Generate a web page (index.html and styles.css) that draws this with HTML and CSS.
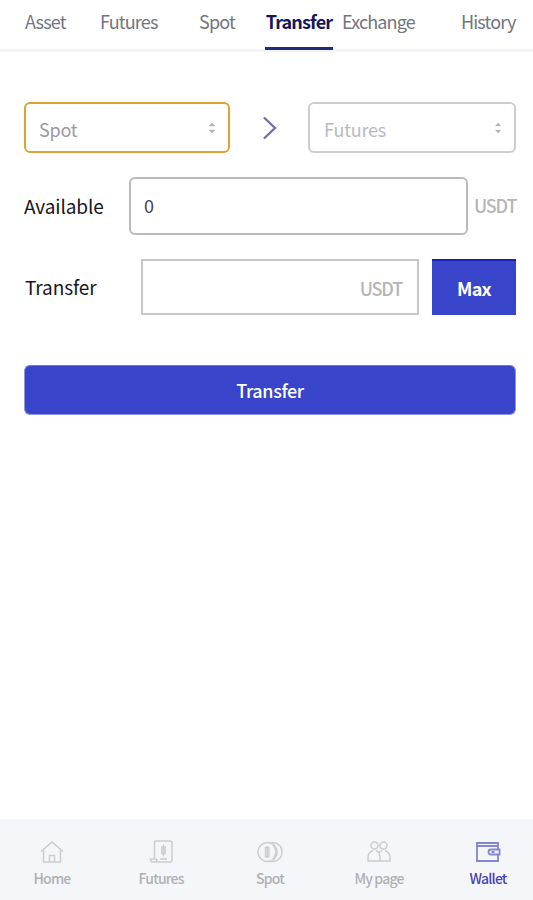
FILE: index.html
```html
<!DOCTYPE html>
<html lang="en">
<head>
  <meta charset="UTF-8">
  <meta name="viewport" content="width=device-width, initial-scale=1">
  <title>Wallet - Transfer</title>
  <link rel="stylesheet" href="styles.css">
</head>
<body>

<nav class="tabs">
  <a class="tab-asset">Asset</a>
  <a class="tab-futures">Futures</a>
  <a class="tab-spot">Spot</a>
  <a class="tab-transfer active">Transfer</a>
  <a class="tab-exchange">Exchange</a>
  <a class="tab-history">History</a>
</nav>

<main>
  <div class="accounts">
    <div class="select from">
      <span>Spot</span>
      <svg width="8" height="12" viewBox="0 0 8 12"><path d="M.5 4.200 4 .5l3.500 3.700zM.5 7.800h7L4 11.500z"/></svg>
    </div>
    <svg class="arrow" width="16" height="24" viewBox="0 0 16 24"><path d="M2 1.5 13 12 2 22.5"/></svg>
    <div class="select to">
      <span>Futures</span>
      <svg width="8" height="12" viewBox="0 0 8 12"><path d="M1 4 4 .8 7 4zM1 8h6l-3 3.200z"/></svg>
    </div>
  </div>

  <div class="row available">
    <label>Available</label>
    <div class="field">0</div>
    <span class="unit">USDT</span>
  </div>

  <div class="row amount">
    <label>Transfer</label>
    <div class="field"><span class="unit">USDT</span></div>
    <button class="max">Max</button>
  </div>

  <button class="submit">Transfer</button>
</main>

<footer class="bottom">
  <a>
    <svg width="26" height="24" viewBox="0 0 26 24">
      <path d="M2 11.5 13 2l11 9.500M4.500 10v12h17V10M10.500 22v-6.500h5V22"/>
    </svg>
    <span>Home</span>
  </a>
  <a>
    <svg width="26" height="24" viewBox="0 0 26 24">
      <path d="M6.500 18V3q0-2 2-2H22q2 0 2 2v17q0 2-2 2H5q-2.500 0-2.500-3H9M9 19q0 3-2 3"/>
      <path class="dense" d="M15.500 4.500v12M13.800 7h3.400v6.500h-3.400zM12 19h7"/>
    </svg>
    <span>Futures</span>
  </a>
  <a>
    <svg width="26" height="24" viewBox="0 0 26 24">
      <circle cx="10.500" cy="12" r="9.600"/>
      <path d="M14 2.700q2-.500 4 0 7 2.300 7 9.300t-7 9.300q-2 .5-4 0M16 5q6 7 0 14"/>
      <path class="dense" d="M8.500 7.500h3.500v9H8.500zM10.250 6v12"/>
    </svg>
    <span>Spot</span>
  </a>
  <a>
    <svg width="26" height="24" viewBox="0 0 26 24">
      <circle cx="8.500" cy="5.500" r="3.500"/>
      <circle cx="17.500" cy="5.500" r="3.500"/>
      <path d="M7 10.500Q2 12 2 18v3h12v-3q0-6-4-7.500M16 10.500Q13.500 11.500 12.700 13.500M19 10.500Q24 12 24 18v3H14"/>
    </svg>
    <span>My page</span>
  </a>
  <a class="active">
    <svg width="26" height="24" viewBox="0 0 26 24">
      <path d="M23 9V3H2v18h21v-6M2 6h21"/>
      <path d="M24.500 9.500H16q-2.500 0-2.500 2.500t2.500 2.500h8.500zM16.500 12h3"/>
    </svg>
    <span>Wallet</span>
  </a>
</footer>

</body>
</html>
```
FILE: styles.css
```css
* {
  box-sizing: border-box;
}

body {
  margin: 0;
  height: 900px;
  display: flex;
  flex-direction: column;
  overflow: hidden;
  background-color: #fff;
  font-family: "Noto Sans CJK KR", "Noto Sans", sans-serif;
  font-size: 18px;
  line-height: 24px;
  color: #171722;
  white-space: nowrap;
}

button {
  border: none;
  padding: 0;
  font-family: inherit;
  font-size: 18px;
  color: #fff;
  background-color: #3845cb;
}

/* top tabs */
.tabs {
  display: flex;
  height: 52px;
  padding: 9px 0 0 25px;
  border-bottom: 3px solid #f4f4f9;
  color: #74757f;
  letter-spacing: -0.85px;
}

.tabs a {
  height: 41px;
}

.tab-asset { width: 75px; }
.tab-futures { width: 99px; }
.tab-spot { width: 66px; }
.tab-transfer { width: 68px; margin-right: 9px; }
.tab-exchange { width: 119px; }

.tabs .active {
  border-bottom: 3px solid #202a83;
  color: #17165a;
  font-weight: bold;
  text-align: center;
}

/* form */
main {
  flex: 1;
  padding: 50px 17px 0 24px;
}

.accounts {
  display: flex;
  align-items: center;
  justify-content: space-between;
}

.select {
  display: flex;
  align-items: center;
  justify-content: space-between;
  height: 51px;
  padding: 2px 12px 0 13px;
  border: 2px solid #cdcdd0;
  border-radius: 6px;
  color: #b9bac1;
  letter-spacing: -0.2px;
}

.select svg {
  fill: #b5b5ba;
  margin-bottom: 2px;
}

.from {
  width: 206px;
  border-color: #e1a135;
  color: #999aa5;
}

.to {
  width: 208px;
  padding-left: 14px;
}

.arrow {
  fill: none;
  stroke: #7370a8;
  stroke-width: 2.4;
  margin-left: 2px;
}

.row {
  display: flex;
  align-items: center;
}

.row label {
  flex-shrink: 0;
  font-size: 19px;
  letter-spacing: -0.1px;
}

.unit {
  color: #b5b5b7;
  font-weight: 500;
  letter-spacing: -1.2px;
}

.available {
  margin-top: 24px;
}

.available label {
  width: 105px;
}

.available .field {
  flex-shrink: 0;
  width: 339px;
  height: 58px;
  padding: 14px 13px;
  border: 2px solid #b9b9c5;
  border-radius: 6px;
  color: #44444c;
}

.available .unit {
  margin: 0 0 2px 6px;
}

.amount {
  margin-top: 24px;
}

.amount label {
  width: 117px;
  padding-left: 1px;
}

.amount .field {
  width: 278px;
  height: 56px;
  padding: 15px 15px;
  border: 2px solid #c8c8ca;
  text-align: right;
}

.max {
  width: 84px;
  height: 56px;
  margin-left: 13px;
  border-top: 2px solid #1b20b4;
  font-weight: bold;
  letter-spacing: -0.7px;
}

.submit {
  display: block;
  width: 492px;
  height: 50px;
  margin-top: 50px;
  border: 1px solid #8e96e2;
  border-top-color: #7078d6;
  border-radius: 6px;
  font-weight: 500;
  letter-spacing: -0.4px;
}

/* bottom menu */
.bottom {
  display: flex;
  justify-content: space-between;
  height: 81px;
  padding: 21px 18px 0 25px;
  background-color: #f5f6fa;
  font-size: 14px;
  color: #b0b0b4;
}

.bottom a {
  display: flex;
  flex-direction: column;
  align-items: center;
  gap: 2px;
  width: 54px;
  font-weight: 500;
  letter-spacing: -0.8px;
}

.bottom svg {
  fill: none;
  stroke: #cccdd0;
  stroke-width: 1.5;
}

.bottom .dense {
  stroke-width: 1.4;
}

.bottom .active {
  color: #4843bd;
}

.bottom .active svg {
  stroke: #8584d3;
  stroke-width: 1.8;
}
```
